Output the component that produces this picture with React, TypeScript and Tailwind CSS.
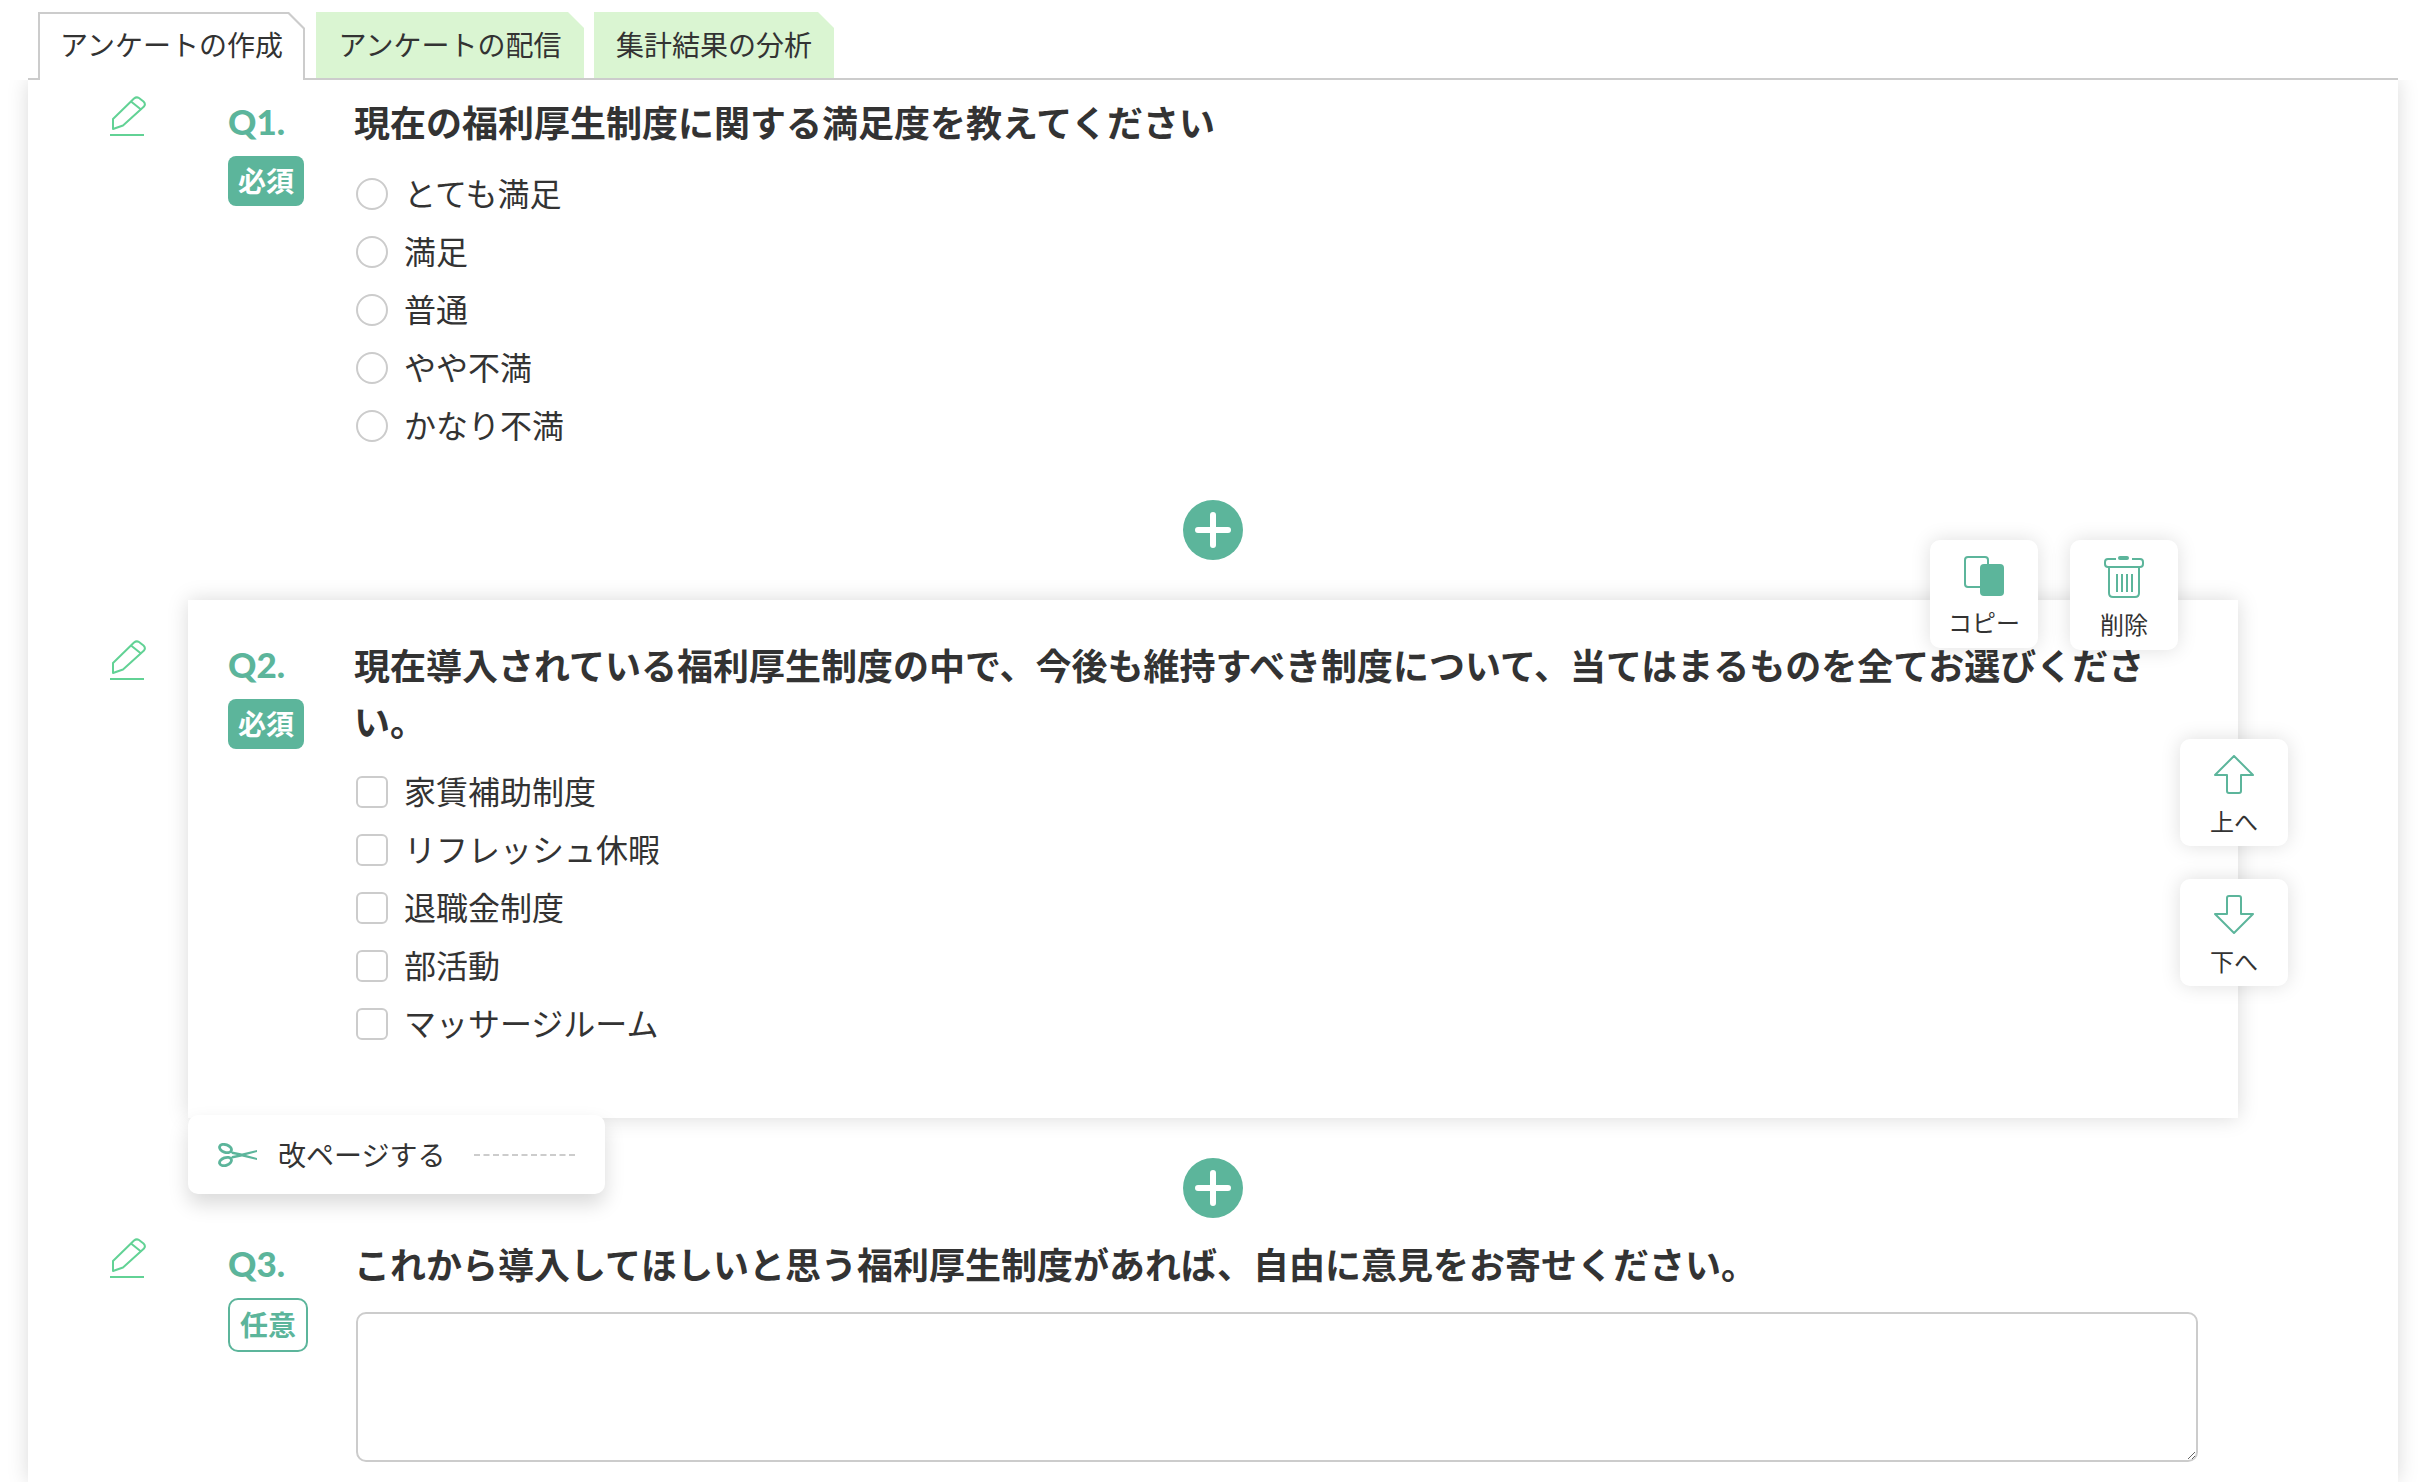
import type { ReactNode } from "react";

const RADIO_OPTIONS = ["とても満足", "満足", "普通", "やや不満", "かなり不満"];
const CHECK_OPTIONS = ["家賃補助制度", "リフレッシュ休暇", "退職金制度", "部活動", "マッサージルーム"];

function PencilIcon() {
  return (
    <svg width="36" height="40" viewBox="0 0 36 40" fill="none" stroke="#62d295" strokeWidth="2" strokeLinejoin="round">
      <path d="M3 23 L24 2.5 Q26.5 0.5 29 2 L33.5 5.5 Q36 8 34 10.5 L13 29.5 L3 33 Z" />
      <path d="M21 5.5 L31 13.5" />
      <path d="M0 39 H34" />
    </svg>
  );
}

function CopyIcon() {
  return (
    <svg width="40" height="40" viewBox="0 0 40 40">
      <rect x="1" y="1" width="23" height="30" rx="3" fill="none" stroke="#5cb59b" strokeWidth="2" />
      <rect x="16" y="8" width="24" height="32" rx="4" fill="#5cb59b" />
    </svg>
  );
}

function TrashIcon() {
  return (
    <svg width="40" height="42" viewBox="0 0 40 42" fill="none" stroke="#5cb59b" strokeWidth="2">
      <rect x="14" y="0" width="11" height="4" rx="2" fill="#5cb59b" stroke="none" />
      <path d="M12 3 H4 Q1 3 1 6 V8 Q1 11 4 11 H36 Q39 11 39 8 V6 Q39 3 36 3 H28" />
      <path d="M5 12 V37 Q5 41 9 41 H31 Q35 41 35 37 V12" />
      <path d="M13 18 V36 M18 18 V36 M23 18 V36 M28 18 V36" />
    </svg>
  );
}

function UpIcon() {
  return (
    <svg width="40" height="40" viewBox="0 0 40 40" fill="none" stroke="#5cb59b" strokeWidth="2" strokeLinejoin="round">
      <path d="M1 20 L20 1 L39 20 H27 V36 Q27 38 25 38 H15 Q13 38 13 36 V20 Z" />
    </svg>
  );
}

function DownIcon() {
  return (
    <svg width="40" height="40" viewBox="0 0 40 40" fill="none" stroke="#5cb59b" strokeWidth="2" strokeLinejoin="round">
      <path d="M1 19 L20 38 L39 19 H27 V3 Q27 1 25 1 H15 Q13 1 13 3 V19 Z" />
    </svg>
  );
}

function ScissorsIcon() {
  return (
    <svg width="40" height="24" viewBox="0 0 40 24" fill="none" stroke="#5cb59b">
      <ellipse cx="7.5" cy="5.5" rx="6.2" ry="3.8" strokeWidth="2.8" transform="rotate(20 7.5 5.5)" />
      <ellipse cx="7.5" cy="18.5" rx="6.2" ry="3.8" strokeWidth="2.8" transform="rotate(-20 7.5 18.5)" />
      <path
        d="M12 8 L24 10.5 L39 7 V9 L28 12 L39 15 V17 L24 13.5 L12 16 L14 13 L19 12 L14 11 Z"
        fill="#5cb59b"
        stroke="none"
      />
    </svg>
  );
}

function PlusButton() {
  return (
    <button className="flex h-[60px] w-[60px] items-center justify-center rounded-full bg-[#5cb59b]">
      <svg width="36" height="36" viewBox="0 0 36 36" stroke="#fff" strokeWidth="6" strokeLinecap="round">
        <path d="M3 18 H33 M18 3 V33" />
      </svg>
    </button>
  );
}

function ActionCard({ label, className, children }: { label: string; className: string; children: ReactNode }) {
  return (
    <div className={`absolute flex w-[108px] flex-col items-center rounded-[10px] bg-white pt-4 text-[24px] leading-[30px] text-[#333] shadow-[0_0_20px_rgba(0,0,0,0.13)] ${className}`}>
      {children}
      <span className="mt-[11px]">{label}</span>
    </div>
  );
}

function OptionList({ type, options }: { type: "radio" | "checkbox"; options: string[] }) {
  return (
    <ul className={type === "radio" ? "mt-[16px]" : "mt-[15px]"}>
      {options.map((option) => (
        <li key={option} className="flex h-[58px] items-center gap-4 text-[32px] text-[#333]">
          <input
            type={type}
            name="q"
            className={
              type === "radio"
                ? "ml-px h-8 w-8 appearance-none rounded-full border-2 border-[#ccc]"
                : "ml-px h-8 w-8 appearance-none rounded-[6px] border-2 border-[#ccc]"
            }
          />
          <span className="pb-1">{option}</span>
        </li>
      ))}
    </ul>
  );
}

function Question({
  no,
  title,
  required,
  pencilClass,
  cardClass,
  overlay,
  children,
}: {
  no: string;
  title: string;
  required: boolean;
  pencilClass: string;
  cardClass: string;
  overlay?: ReactNode;
  children: ReactNode;
}) {
  return (
    <div className="flex">
      <div className={`mr-[42px] w-9 ${pencilClass}`}>
        <PencilIcon />
      </div>
      <div className={`relative flex w-[2050px] pl-10 pr-10 ${cardClass}`}>
        <div className="w-[127px] shrink-0">
          <div className="-mt-[2px] font-['Lato',sans-serif] text-[35px] font-black leading-[56px] text-[#5cb59b]">{no}</div>
          {required ? (
            <div className="mt-[7px] flex h-[50px] w-[76px] items-center justify-center rounded-lg bg-[#5cb59b] pb-[2px] text-[28px] font-bold text-white">
              必須
            </div>
          ) : (
            <div className="mt-[7px] flex h-[54px] w-20 items-center justify-center rounded-[10px] border-2 border-[#5cb59b] pb-[2px] text-[28px] font-bold text-[#5cb59b]">
              任意
            </div>
          )}
        </div>
        <div className="min-w-0 flex-1">
          <h2 className="-ml-px -mt-[2px] text-[36px] font-bold leading-[56px] text-[#333]">{title}</h2>
          {children}
        </div>
        {overlay}
      </div>
    </div>
  );
}

export default function App() {
  return (
    <div className="h-[1482px] overflow-hidden bg-white font-['Noto_Sans_CJK_JP','Noto_Sans',sans-serif]">
      <header className="relative z-10 bg-white pl-7 pr-5 pt-3">
        <div className="flex h-[68px] border-b-2 border-[#ccc] pl-[10px]">
          <div className="mr-[11px] h-[68px] w-[267px] bg-[#ccc] px-[2px] pt-[2px] [clip-path:polygon(0_0,251px_0,100%_16px,100%_100%,0_100%)]">
            <div className="flex h-full items-center justify-center bg-white pb-[6px] text-[28px] text-[#333] [clip-path:polygon(0_0,248px_0,100%_15px,100%_100%,0_100%)]">
              アンケートの作成
            </div>
          </div>
          <div className="mr-[10px] flex h-[66px] w-[268px] items-center justify-center bg-[#daf5d2] pb-[3px] text-[28px] text-[#333] [clip-path:polygon(0_0,252px_0,100%_16px,100%_100%,0_100%)]">
            アンケートの配信
          </div>
          <div className="flex h-[66px] w-[240px] items-center justify-center bg-[#daf5d2] pb-[3px] text-[28px] text-[#333] [clip-path:polygon(0_0,224px_0,100%_16px,100%_100%,0_100%)]">
            集計結果の分析
          </div>
        </div>
      </header>

      <main className="ml-7 mr-5 h-[1402px] bg-white pl-[82px] shadow-[0_0_20px_rgba(0,0,0,0.15)]">
        <Question
          no="Q1."
          title="現在の福利厚生制度に関する満足度を教えてください"
          required
          pencilClass="pt-[16px]"
          cardClass="pt-[15px]"
        >
          <OptionList type="radio" options={RADIO_OPTIONS} />
        </Question>

        <div className="ml-[78px] flex w-[2050px] justify-center pb-10 pt-[45px]">
          <PlusButton />
        </div>

        <Question
          no="Q2."
          title="現在導入されている福利厚生制度の中で、今後も維持すべき制度について、当てはまるものを全てお選びください。"
          required
          pencilClass="pt-10"
          cardClass="bg-white pb-[65px] pt-[38px] shadow-[0_0_20px_rgba(0,0,0,0.15)]"
          overlay={
            <>
              <ActionCard label="コピー" className="left-[1742px] top-[-60px] h-[108px]">
                <CopyIcon />
              </ActionCard>
              <ActionCard label="削除" className="left-[1882px] top-[-60px] h-[110px]">
                <TrashIcon />
              </ActionCard>
              <ActionCard label="上へ" className="left-[1992px] top-[139px] h-[107px]">
                <UpIcon />
              </ActionCard>
              <ActionCard label="下へ" className="left-[1992px] top-[279px] h-[107px]">
                <DownIcon />
              </ActionCard>
            </>
          }
        >
          <OptionList type="checkbox" options={CHECK_OPTIONS} />
        </Question>

        <div className="relative ml-[78px] flex w-[2050px] justify-center pt-10">
          <PlusButton />
          <div className="absolute left-0 top-[-3px] flex h-[79px] w-[417px] items-center rounded-[10px] bg-white pl-[30px] text-[28px] text-[#333] shadow-[0_10px_20px_rgba(0,0,0,0.15)]">
            <ScissorsIcon />
            <span className="ml-5 pb-[2px]">改ページする</span>
            <span className="ml-[29px] w-[101px] border-t-2 border-dashed border-[#ccc]" />
          </div>
        </div>

        <Question
          no="Q3."
          title="これから導入してほしいと思う福利厚生制度があれば、自由に意見をお寄せください。"
          required={false}
          pencilClass="pt-[20px]"
          cardClass="pt-[19px]"
        >
          <textarea className="ml-px mt-[21px] block h-[150px] w-[1842px] rounded-[10px] border-2 border-[#ccc] bg-white" />
        </Question>
      </main>
    </div>
  );
}
